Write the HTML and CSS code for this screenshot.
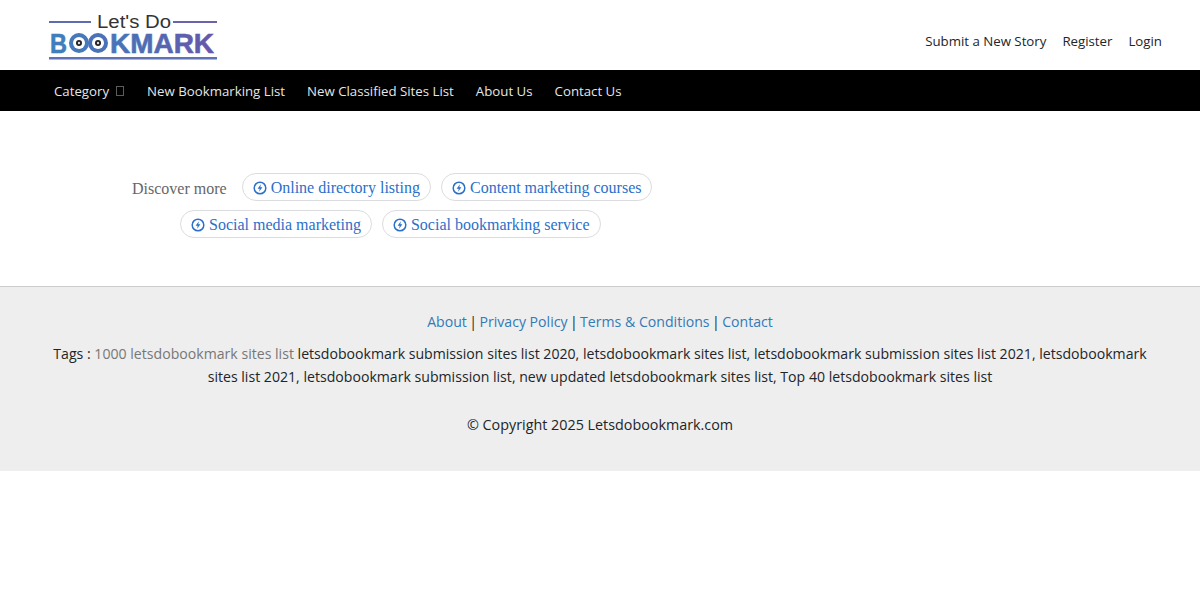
FILE: index.html
```html
<!DOCTYPE html>
<html>
<head>
<meta charset="utf-8" />
<title>Let's Do Bookmark</title>
<link rel="stylesheet" href="styles.css">
</head>
<body>
	<div class="topbar">
		<a class="logo" href="#">
			<svg width="170" height="48" viewBox="0 0 170 48">
				<defs>
					<linearGradient id="logograd" gradientUnits="userSpaceOnUse" x1="0" y1="0" x2="170" y2="0">
						<stop offset="0" stop-color="#3f80bd"/>
						<stop offset="0.5" stop-color="#4a70b6"/>
						<stop offset="1" stop-color="#6a55a8"/>
					</linearGradient>
				</defs>
				<rect x="1" y="8" width="42" height="2" fill="#5f6bb0"/>
				<rect x="125" y="8" width="44" height="2" fill="#6a62ab"/>
				<text x="49" y="15" class="logoTop" textLength="74" lengthAdjust="spacingAndGlyphs">Let's Do</text>
				<text x="2" y="40" class="logoMain" fill="url(#logograd)" stroke="url(#logograd)" textLength="17" lengthAdjust="spacingAndGlyphs">B</text>
				<circle cx="31" cy="30" r="10" fill="#4678ba"/>
				<circle cx="31" cy="30" r="6" fill="#fff"/>
				<circle cx="31" cy="30" r="3" fill="#222"/>
				<circle cx="31" cy="30" r="1.200" fill="#ddd"/>
				<circle cx="50" cy="30" r="10" fill="#4b72b8"/>
				<circle cx="50" cy="30" r="6" fill="#fff"/>
				<circle cx="50" cy="30" r="3" fill="#222"/>
				<circle cx="50" cy="30" r="1.200" fill="#ddd"/>
				<text x="62" y="40" class="logoMain" fill="url(#logograd)" stroke="url(#logograd)" textLength="104" lengthAdjust="spacingAndGlyphs">KMARK</text>
				<rect x="1" y="44" width="168" height="2.500" fill="#5f72b8"/>
			</svg>
		</a>
		<div class="topLinks">
			<a href="#">Submit a New Story</a>
			<a href="#">Register</a>
			<a href="#">Login</a>
		</div>
	</div>

	<div class="navbar">
		<a href="#">Category <span class="tofu"></span></a>
		<a href="#">New Bookmarking List</a>
		<a href="#">New Classified Sites List</a>
		<a href="#">About Us</a>
		<a href="#">Contact Us</a>
	</div>

	<div class="discover">
		<div class="discoverRow firstRow">
			<span class="discoverLabel">Discover more</span>
			<a class="chip" href="#">
				<svg class="chipIcon" width="14" height="14" viewBox="0 0 14 14"><circle cx="7" cy="7" r="5.800"/><path d="M7.900 3.300 4.600 7.700H6.700L6.100 10.700 9.400 6.300H7.300Z"/></svg>
				Online directory listing
			</a>
			<a class="chip" href="#">
				<svg class="chipIcon" width="14" height="14" viewBox="0 0 14 14"><circle cx="7" cy="7" r="5.800"/><path d="M7.900 3.300 4.600 7.700H6.700L6.100 10.700 9.400 6.300H7.300Z"/></svg>
				Content marketing courses
			</a>
		</div>
		<div class="discoverRow secondRow">
			<a class="chip" href="#">
				<svg class="chipIcon" width="14" height="14" viewBox="0 0 14 14"><circle cx="7" cy="7" r="5.800"/><path d="M7.900 3.300 4.600 7.700H6.700L6.100 10.700 9.400 6.300H7.300Z"/></svg>
				Social media marketing
			</a>
			<a class="chip" href="#">
				<svg class="chipIcon" width="14" height="14" viewBox="0 0 14 14"><circle cx="7" cy="7" r="5.800"/><path d="M7.900 3.300 4.600 7.700H6.700L6.100 10.700 9.400 6.300H7.300Z"/></svg>
				Social bookmarking service
			</a>
		</div>
	</div>

	<div class="footer">
		<p class="footLinks"><a href="#">About</a> <span class="sep">|</span> <a href="#">Privacy Policy</a> <span class="sep">|</span> <a href="#">Terms &amp; Conditions</a> <span class="sep">|</span> <a href="#">Contact</a></p>
		<p class="tags">Tags : <span class="tagMuted">1000 letsdobookmark sites list</span> letsdobookmark submission sites list 2020, letsdobookmark sites list, letsdobookmark submission sites list 2021, letsdobookmark sites list 2021, letsdobookmark submission list, new updated letsdobookmark sites list, Top 40 letsdobookmark sites list</p>
		<p class="copy">© Copyright 2025 Letsdobookmark.com</p>
	</div>
</body>
</html>
```
FILE: styles.css
```css
body {
	margin: 0;
	font-size: 13.250px;
	line-height: 23px;
	font-family: "Open Sans", "Noto Sans", Arial, sans-serif;
	color: #212529;
	background: #fff;
}

a {
	text-decoration: none;
}

.topbar {
	height: 70px;
	display: flex;
	justify-content: space-between;
	padding: 0 38px 0 48px;
}

.logo {
	padding-top: 13px;
}

.logo svg {
	display: block;
}

.logoTop {
	font-family: "Liberation Sans", Arial, sans-serif;
	font-size: 18px;
	fill: #333;
}

.logoMain {
	font-family: "Liberation Sans", Arial, sans-serif;
	font-size: 28px;
	font-weight: bold;
	stroke-width: .600px;
}

.topLinks {
	display: flex;
	gap: 16px;
	padding-top: 30px;
}

.topLinks a {
	color: #212529;
}

.navbar {
	height: 41px;
	box-sizing: border-box;
	padding: 2px 0 0 54px;
	background: #000;
	display: flex;
	align-items: center;
	gap: 22px;
}

.navbar a {
	color: #fff;
	opacity: .9;
}

.tofu {
	display: inline-block;
	width: 6px;
	height: 8px;
	margin: 0 1.500px 0 3px;
	border: 1px solid #666;
}

.discover {
	height: 175px;
	font-family: "Liberation Serif", "Times New Roman", serif;
	font-size: 16px;
}

.discoverRow {
	display: flex;
	align-items: center;
	gap: 10px;
}

.firstRow {
	padding: 62px 0 0 132px;
}

.secondRow {
	padding: 9px 0 0 180px;
}

.discoverLabel {
	color: #666;
	margin-right: 5px;
	padding-top: 3px;
}

.chip {
	display: flex;
	align-items: center;
	gap: 4px;
	height: 26px;
	padding: 0 10px;
	color: #2b6fc9;
	border: 1px solid #dadce0;
	border-radius: 14px;
}

.chipIcon {
	margin-top: 2px;
	fill: none;
	stroke: #2b6fc9;
	stroke-width: 1.500;
}

.chipIcon path {
	fill: #2b6fc9;
	stroke: none;
}

.footer {
	height: 185px;
	box-sizing: border-box;
	background: #eee;
	border-top: 1px solid #ccc;
	padding: 23px 48px 0;
	text-align: center;
	font-size: 14.120px;
}

.footer p {
	margin: 0;
}

.footLinks a {
	color: #337ab7;
}

.sep {
	margin: 0 -1.300px;
}

.tags {
	margin-top: 9px !important;
}

.tagMuted {
	color: #777;
}

.copy {
	margin-top: 25px !important;
	font-size: 14.340px;
}
```
